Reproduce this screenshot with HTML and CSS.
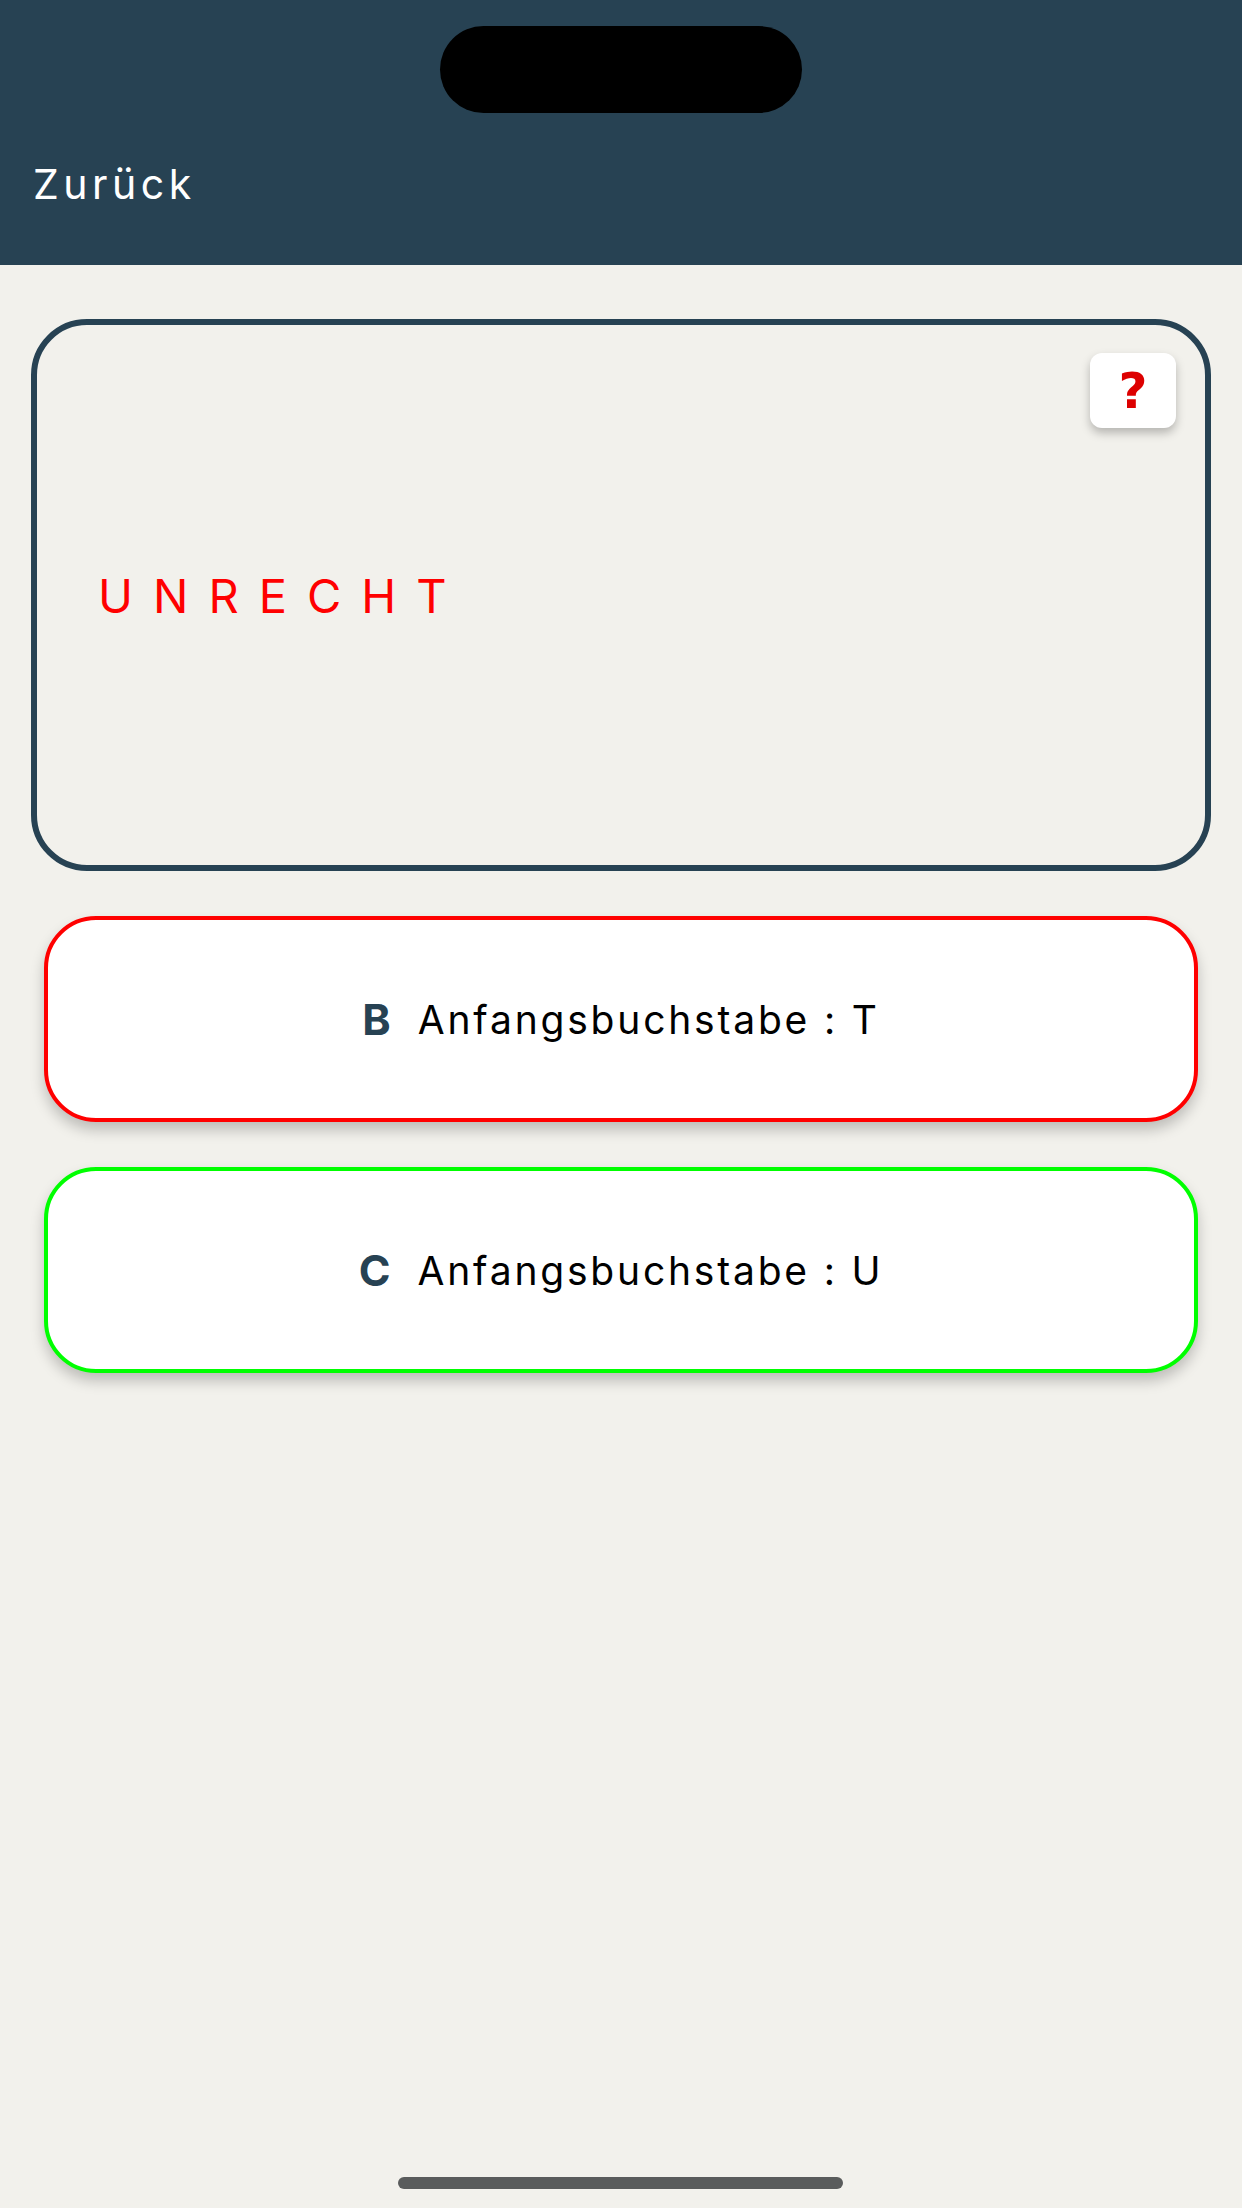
FILE: index.html
```html
<!DOCTYPE html>
<html lang="de">
<head>
    <meta charset="UTF-8">
    <meta name="viewport" content="width=device-width, initial-scale=1.0">
    <title>Quiz</title>
    <link rel="stylesheet" href="styles.css">
</head>
<body>
    <div class="island"></div>
    <div class="header">
        <span class="back">Zurück</span>
    </div>
    <div class="content">
        <div class="question-card">
            <p class="result">UNRECHT</p>
            <button class="help">?</button>
        </div>
        <div class="option wrong">
            <span class="letter">B</span>
            <span class="answer">Anfangsbuchstabe : T</span>
        </div>
        <div class="option right">
            <span class="letter">C</span>
            <span class="answer">Anfangsbuchstabe : U</span>
        </div>
    </div>
    <div class="home-bar"></div>
</body>
</html>
```

FILE: styles.css
```css
body {
    margin: 0;
    height: 2208px;
    background-color: #f2f1ec;
    font-family: Inter, "Liberation Sans", sans-serif;
    position: relative;
    overflow: hidden;
}
.island {
    position: absolute;
    top: 26px;
    left: 440px;
    width: 362px;
    height: 87px;
    border-radius: 44px;
    background-color: black;
}
.header {
    height: 265px;
    box-sizing: border-box;
    background-color: #274253;
    padding: 159px 0 0 33px;
}
.back {
    color: white;
    font-size: 41px;
    line-height: 50px;
    letter-spacing: 4.5px;
}
.content {
    padding: 54px 31px 0;
}
.question-card {
    position: relative;
    height: 552px;
    box-sizing: border-box;
    border: 6px solid #274253;
    border-radius: 56px;
    display: flex;
    align-items: center;
    padding-left: 61px;
}
.result {
    margin: 0;
    color: #ff0000;
    font-size: 47px;
    letter-spacing: 20px;
}
.help {
    position: absolute;
    top: 28px;
    right: 29px;
    width: 86px;
    height: 75px;
    border: none;
    border-radius: 12px;
    background-color: white;
    box-shadow: 0 5px 10px rgba(0, 0, 0, 0.25);
    color: #dd0000;
    font-family: "DejaVu Sans", sans-serif;
    font-weight: bold;
    font-size: 50px;
    padding: 0;
}
.option {
    margin: 45px 13px 0;
    height: 206px;
    box-sizing: border-box;
    border: 4px solid;
    border-radius: 52px;
    background-color: white;
    box-shadow: 0 8px 14px rgba(0, 0, 0, 0.22);
    display: flex;
    align-items: center;
    justify-content: center;
}
.wrong {
    border-color: #ff0000;
}
.right {
    border-color: #00ff00;
}
.letter {
    color: #274253;
    font-weight: bold;
    font-size: 43px;
    margin-right: 27px;
}
.answer {
    color: black;
    font-size: 39px;
    letter-spacing: 2.8px;
}
.home-bar {
    position: absolute;
    bottom: 19px;
    left: 398px;
    width: 445px;
    height: 12px;
    border-radius: 6px;
    background-color: #5a5c5c;
}
```
